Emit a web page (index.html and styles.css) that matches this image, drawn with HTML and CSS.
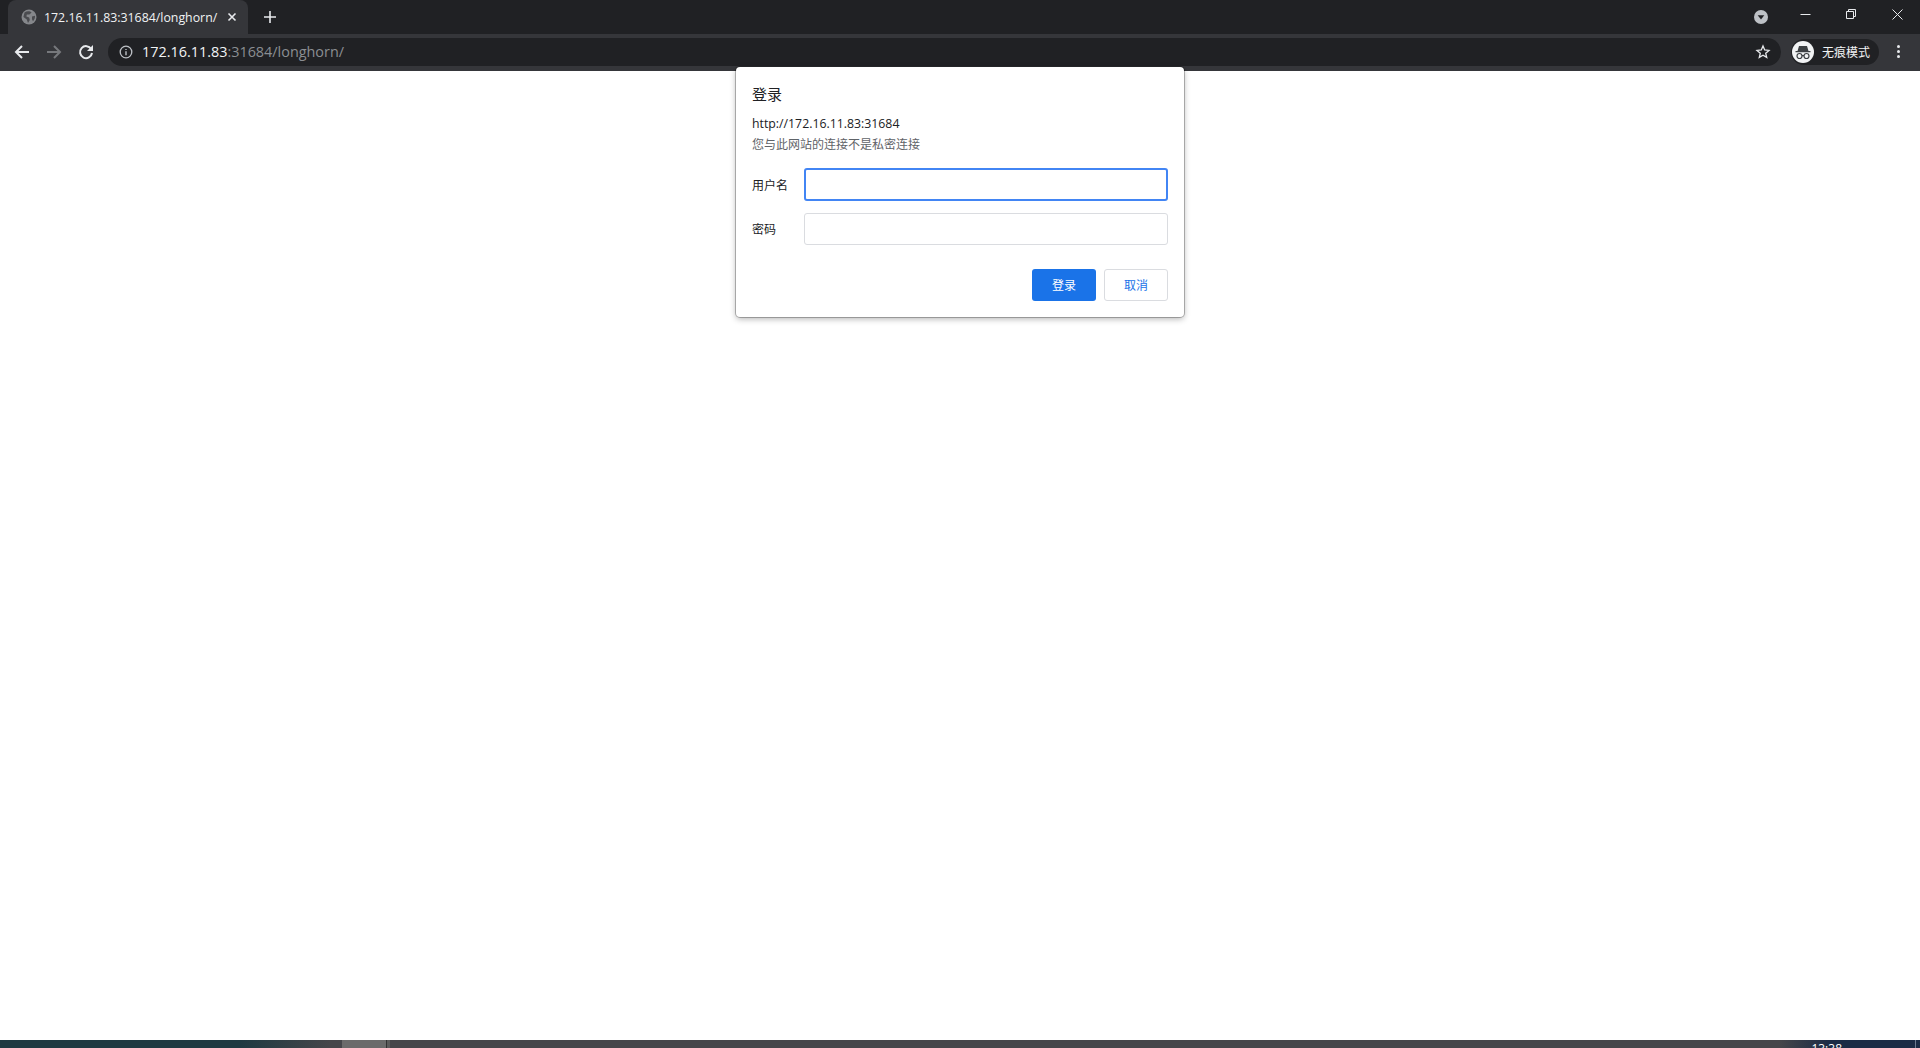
FILE: index.html
```html
<!DOCTYPE html>
<html lang="en">
<head>
    <meta charset="UTF-8">
    <meta name="viewport" content="width=device-width, initial-scale=1.0">
    <title>172.16.11.83:31684/longhorn/</title>
    <link rel="stylesheet" href="styles.css">
</head>
<body>
    <div class="tabstrip">
        <div class="tab">
            <svg class="favicon" width="16" height="16" viewBox="0 0 16 16">
                <circle cx="8" cy="8" r="7.5" fill="#85878b"/>
                <path d="M3.5 3.4 C6 1.8 9 2 10.6 3.4 L8.4 5.6 L5.8 5.6 L5.4 7.6 L8.2 8.6 L8.8 11 L7 14 L5.8 10.6 L2.4 8 Z M11 7.4 L14 6.8 C14.2 9 13.4 11 12 12.2 L11 10.2 Z" fill="#4a4b4f"/>
            </svg>
            <span class="tab-title">172.16.11.83:31684/longhorn/</span>
            <svg class="tab-close" width="10" height="10" viewBox="0 0 10 10">
                <path d="M1.5 1.5 L8.5 8.5 M8.5 1.5 L1.5 8.5" stroke="#e8eaed" stroke-width="1.6" fill="none"/>
            </svg>
        </div>
        <svg class="new-tab" width="12" height="12" viewBox="0 0 12 12">
            <path d="M6 0 V12 M0 6 H12" stroke="#e8eaed" stroke-width="1.6" fill="none"/>
        </svg>
        <div class="spacer"></div>
        <svg class="tab-search" width="14" height="14" viewBox="0 0 14 14">
            <circle cx="7" cy="7" r="7" fill="#bdc1c6"/>
            <path d="M3.7 5.3 H10.3 L7 9.5 Z" fill="#202124"/>
        </svg>
        <div class="win-btn">
            <svg width="11" height="11" viewBox="0 0 11 11"><path d="M0.5 5.5 H10.5" stroke="#e8eaed" fill="none"/></svg>
        </div>
        <div class="win-btn">
            <svg width="11" height="11" viewBox="0 0 11 11"><path d="M0.5 2.5 H7.5 V9.5 H0.5 Z M2.5 2.5 V0.5 H9.5 V7.5 H7.5" stroke="#e8eaed" fill="none"/></svg>
        </div>
        <div class="win-btn">
            <svg width="11" height="11" viewBox="0 0 11 11"><path d="M0.5 0.5 L10.5 10.5 M10.5 0.5 L0.5 10.5" stroke="#e8eaed" fill="none"/></svg>
        </div>
    </div>

    <div class="toolbar">
        <svg class="nav-icon" width="16" height="16" viewBox="0 0 16 16">
            <path d="M15 8 H2 M8 2 L2 8 L8 14" stroke="#e8eaed" stroke-width="2" fill="none"/>
        </svg>
        <svg class="nav-icon" width="16" height="16" viewBox="0 0 16 16">
            <path d="M1 8 H14 M8 2 L14 8 L8 14" stroke="#76787c" stroke-width="2" fill="none"/>
        </svg>
        <svg class="nav-icon" width="16" height="16" viewBox="0 0 16 16">
            <path d="M13.2 5 A6 6 0 1 0 14 9" stroke="#e8eaed" stroke-width="2" fill="none"/>
            <path d="M15 1 V7 H9 Z" fill="#e8eaed"/>
        </svg>
        <div class="omnibox">
            <svg class="info-icon" width="14" height="14" viewBox="0 0 14 14">
                <circle cx="7" cy="7" r="5.8" stroke="#bdc1c6" stroke-width="1.3" fill="none"/>
                <path d="M7 6.2 V10.2 M7 3.9 V5.1" stroke="#bdc1c6" stroke-width="1.4" fill="none"/>
            </svg>
            <span class="url"><span class="url-host">172.16.11.83</span>:31684/longhorn/</span>
            <div class="spacer"></div>
            <svg class="star" width="16" height="16" viewBox="0 0 16 16">
                <path d="M8 2 L9.7 6 L14 6.4 L10.7 9.2 L11.7 13.4 L8 11.2 L4.3 13.4 L5.3 9.2 L2 6.4 L6.3 6 Z" stroke="#e8eaed" stroke-width="1.3" fill="none"/>
            </svg>
        </div>
        <div class="incognito">
            <span class="incognito-avatar">
                <svg width="18" height="18" viewBox="0 0 18 18">
                    <path d="M5 3 H13 L14.5 8 H3.5 Z M1.5 8 H16.5 V9.2 H1.5 Z" fill="#3c4043"/>
                    <circle cx="5.5" cy="13" r="2.5" stroke="#3c4043" stroke-width="1.2" fill="none"/>
                    <circle cx="12.5" cy="13" r="2.5" stroke="#3c4043" stroke-width="1.2" fill="none"/>
                    <path d="M8 12.6 H10" stroke="#3c4043" stroke-width="1.2" fill="none"/>
                </svg>
            </span>
            <span class="incognito-label">无痕模式</span>
        </div>
        <div class="menu-dots"><i></i><i></i><i></i></div>
    </div>

    <div class="page">
        <form class="auth-dialog">
            <h1 class="auth-title">登录</h1>
            <div class="auth-origin">http://172.16.11.83:31684</div>
            <div class="auth-note">您与此网站的连接不是私密连接</div>
            <div class="auth-row">
                <label class="auth-label" for="username">用户名</label>
                <div class="auth-input focused" id="username"></div>
            </div>
            <div class="auth-row">
                <label class="auth-label" for="password">密码</label>
                <div class="auth-input" id="password"></div>
            </div>
            <div class="auth-actions">
                <button type="button" class="btn-primary">登录</button>
                <button type="button" class="btn-cancel">取消</button>
            </div>
        </form>
    </div>

    <div class="taskbar">
        <div class="task-item"></div>
        <div class="task-divider"></div>
        <div class="spacer"></div>
        <span class="task-clock">13:38</span>
        <div class="task-edge"></div>
    </div>
</body>
</html>
```

FILE: styles.css
```css
* {
    box-sizing: border-box;
}

html,
body {
    height: 100%;
}

body {
    margin: 0;
    display: flex;
    flex-direction: column;
    overflow: hidden;
    background-color: #ffffff;
    font-family: "Open Sans", "Noto Sans CJK SC", sans-serif;
}

.spacer {
    flex: 1;
}

.tabstrip {
    flex: none;
    height: 34px;
    display: flex;
    align-items: center;
    background-color: #202124;
}

.tab {
    width: 240px;
    height: 34px;
    margin-left: 8px;
    padding: 0 11px 0 13px;
    display: flex;
    align-items: center;
    background-color: #35363a;
    border-radius: 8px 8px 0 0;
}

.favicon {
    flex: none;
}

.tab-title {
    flex: 1;
    margin-left: 7px;
    font-size: 12.35px;
    color: #f1f3f4;
    white-space: nowrap;
    overflow: hidden;
}

.tab-close {
    flex: none;
}

.new-tab {
    margin-left: 16px;
}

.tab-search {
    margin-right: 14px;
}

.win-btn {
    width: 46px;
    height: 28px;
    align-self: flex-start;
    display: flex;
    align-items: center;
    justify-content: center;
}

.toolbar {
    flex: none;
    height: 37px;
    padding: 0 8px 2px 14px;
    display: flex;
    align-items: center;
    background-color: #35363a;
}

.nav-icon {
    flex: none;
    margin-right: 16px;
}

.omnibox {
    width: 1673px;
    height: 28px;
    margin-left: -2px;
    padding: 0 10px;
    display: flex;
    align-items: center;
    background-color: #202124;
    border-radius: 14px;
}

.info-icon {
    flex: none;
    margin-left: 1px;
}

.url {
    margin-left: 9px;
    font-size: 14.4px;
    color: #8b8e92;
    white-space: nowrap;
}

.url-host {
    color: #f1f3f4;
}

.incognito {
    height: 26px;
    margin-left: 10px;
    padding: 0 8px 0 2px;
    display: flex;
    align-items: center;
    background-color: #202124;
    border-radius: 13px;
}

.incognito-avatar {
    width: 22px;
    height: 22px;
    margin-left: -1px;
    display: flex;
    align-items: center;
    justify-content: center;
    background-color: #f1f3f4;
    border-radius: 50%;
}

.incognito-label {
    margin-left: 8px;
    margin-right: 1px;
    font-size: 12px;
    color: #f1f3f4;
}

.menu-dots {
    margin-left: 18px;
    display: flex;
    flex-direction: column;
    gap: 2px;
}

.menu-dots i {
    width: 3px;
    height: 3px;
    background-color: #e8eaed;
    border-radius: 50%;
}

.page {
    flex: 1;
    position: relative;
}

.auth-dialog {
    position: absolute;
    left: 736px;
    top: -4px;
    width: 448px;
    height: 250px;
    padding: 16px;
    background-color: #ffffff;
    border-radius: 4px;
    box-shadow: 0 0 0 1px rgba(0, 0, 0, 0.25), 0 2px 6px rgba(0, 0, 0, 0.3);
}

.auth-title {
    margin: 0 0 9px;
    font-size: 15px;
    font-weight: 400;
    line-height: 22px;
    color: #202124;
}

.auth-origin {
    font-size: 12.3px;
    line-height: 20px;
    color: #202124;
}

.auth-note {
    margin-top: 1px;
    font-size: 12px;
    line-height: 20px;
    color: #5f6368;
}

.auth-row {
    height: 33px;
    margin-top: 11px;
    display: flex;
    align-items: center;
}

.auth-note + .auth-row {
    margin-top: 13px;
}

.auth-label {
    width: 52px;
    font-size: 12px;
    color: #202124;
}

.auth-input {
    width: 364px;
    height: 32px;
    background-color: #ffffff;
    border: 1px solid #dadce0;
    border-radius: 3px;
}

.auth-input.focused {
    height: 33px;
    border: 2px solid #4285f4;
}

.auth-actions {
    margin-top: 24px;
    display: flex;
    justify-content: flex-end;
    gap: 8px;
}

.btn-primary,
.btn-cancel {
    width: 64px;
    height: 32px;
    padding: 0;
    font-family: inherit;
    font-size: 12px;
    border-radius: 3px;
}

.btn-primary {
    color: #ffffff;
    background-color: #1a73e8;
    border: none;
}

.btn-cancel {
    color: #1a73e8;
    background-color: #ffffff;
    border: 1px solid #dadce0;
}

.taskbar {
    flex: none;
    height: 8px;
    display: flex;
    overflow: hidden;
    background: linear-gradient(90deg, #1f3a42 0, #1f3a42 240px, #45464a 330px, #45464a 1780px, #1b2b45 1830px, #1b2b45 100%);
}

.task-item {
    width: 44px;
    margin-left: 342px;
    background-color: #6b6b6b;
}

.task-divider {
    width: 4px;
    background-color: #5a5a5a;
    border-left: 1px solid #333333;
}

.task-clock {
    margin-top: 1px;
    margin-right: 73px;
    font-size: 12px;
    line-height: 16px;
    color: #ffffff;
}

.task-edge {
    width: 1px;
    margin-right: 4px;
    background-color: #6d7a90;
}
```
